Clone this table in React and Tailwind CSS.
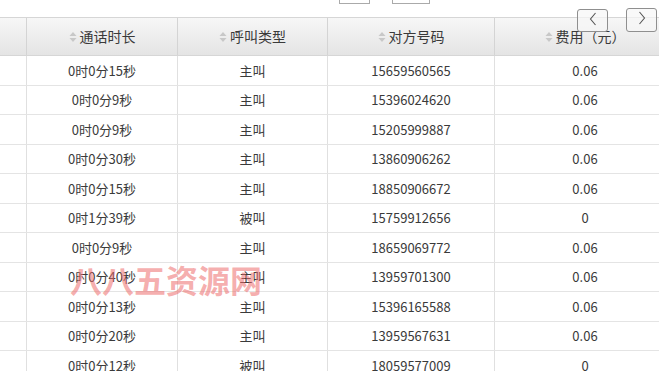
import React from "react";

const rows = [
  ["0时0分15秒", "主叫", "15659560565", "0.06"],
  ["0时0分9秒", "主叫", "15396024620", "0.06"],
  ["0时0分9秒", "主叫", "15205999887", "0.06"],
  ["0时0分30秒", "主叫", "13860906262", "0.06"],
  ["0时0分15秒", "主叫", "18850906672", "0.06"],
  ["0时1分39秒", "被叫", "15759912656", "0"],
  ["0时0分9秒", "主叫", "18659069772", "0.06"],
  ["0时0分40秒", "主叫", "13959701300", "0.06"],
  ["0时0分13秒", "主叫", "15396165588", "0.06"],
  ["0时0分20秒", "主叫", "13959567631", "0.06"],
  ["0时0分12秒", "被叫", "18059577009", "0"],
];

const widths = ["w-[27px]", "w-[151px]", "w-[150px]", "w-[167px]", "w-[180px]"];

function SortIcon() {
  return (
    <svg width="8" height="12" viewBox="0 0 8 12" className="mr-[3px]">
      <path d="M0.5 5 L4 1 L7.5 5 Z" fill="#c8c8c8" />
      <path d="M0.5 7 L4 11 L7.5 7 Z" fill="#c8c8c8" />
    </svg>
  );
}

function Chevron({ dir }) {
  return (
    <svg width="10" height="14" viewBox="0 0 10 14">
      <path
        d={dir === "left" ? "M7.5 1 L2.5 7 L7.5 13" : "M2.5 1 L7.5 7 L2.5 13"}
        fill="none"
        stroke="#555"
        strokeWidth="1.1"
      />
    </svg>
  );
}

export default function App() {
  const headers = ["", "通话时长", "呼叫类型", "对方号码", "费用（元）"];
  return (
    <div
      className="relative w-[659px] h-[371px] overflow-hidden bg-white text-[#3a3a3a]"
      style={{ fontFamily: '"SimSun", "Noto Sans CJK SC", sans-serif' }}
    >
      {/* top partial buttons */}
      <div className="flex h-[17px] items-start">
        <div className="ml-[339px] w-[31px] h-[4px] border-x border-b border-[#aaa] bg-white" />
        <div className="ml-[22px] w-[38px] h-[4px] border-x border-b border-[#aaa] bg-white" />
      </div>

      {/* header */}
      <div className="flex w-[675px] h-[39px] border-t border-b border-[#d6d6d6] bg-gradient-to-b from-[#f7f7f7] to-[#e4e4e4]">
        {headers.map((h, i) => (
          <div
            key={i}
            className={`${widths[i]} shrink-0 flex items-center justify-center text-[14px] ${i < 4 ? "border-r border-[#d4d4d4]" : ""}`}
          >
            {h && <SortIcon />}
            {h}
          </div>
        ))}
      </div>

      {/* body */}
      <div className="flex flex-col w-[675px]">
        {rows.map((r, ri) => (
          <div key={ri} className="flex h-[29.5px] border-b border-[#e4e4e4] shrink-0">
            <div className={`${widths[0]} shrink-0 border-r border-[#e0e0e0]`} />
            {r.map((c, ci) => (
              <div
                key={ci}
                className={`${widths[ci + 1]} shrink-0 flex items-center justify-center text-[13px] ${ci < 3 ? "border-r border-[#e0e0e0]" : ""}`}
              >
                {c}
              </div>
            ))}
          </div>
        ))}
      </div>

      {/* nav buttons */}
      <button className="absolute left-[577px] top-[9px] w-[31px] h-[23px] border border-[#8f8f8f] rounded-[3px] bg-[#f6f6f6]/70 flex items-start justify-center pt-[2px]">
        <Chevron dir="left" />
      </button>
      <button className="absolute left-[626px] top-[8px] w-[31px] h-[24px] border border-[#8f8f8f] rounded-[3px] bg-[#f6f6f6]/70 flex items-start justify-center pt-[2px]">
        <Chevron dir="right" />
      </button>

      {/* watermark */}
      <div
        className="absolute left-[70px] top-[259px] text-[32px] leading-[40px] font-bold text-[#ee6a6a]/55 pointer-events-none whitespace-nowrap"
        style={{ fontFamily: '"Noto Sans CJK SC", sans-serif' }}
      >
        八八五资源网
      </div>
    </div>
  );
}
